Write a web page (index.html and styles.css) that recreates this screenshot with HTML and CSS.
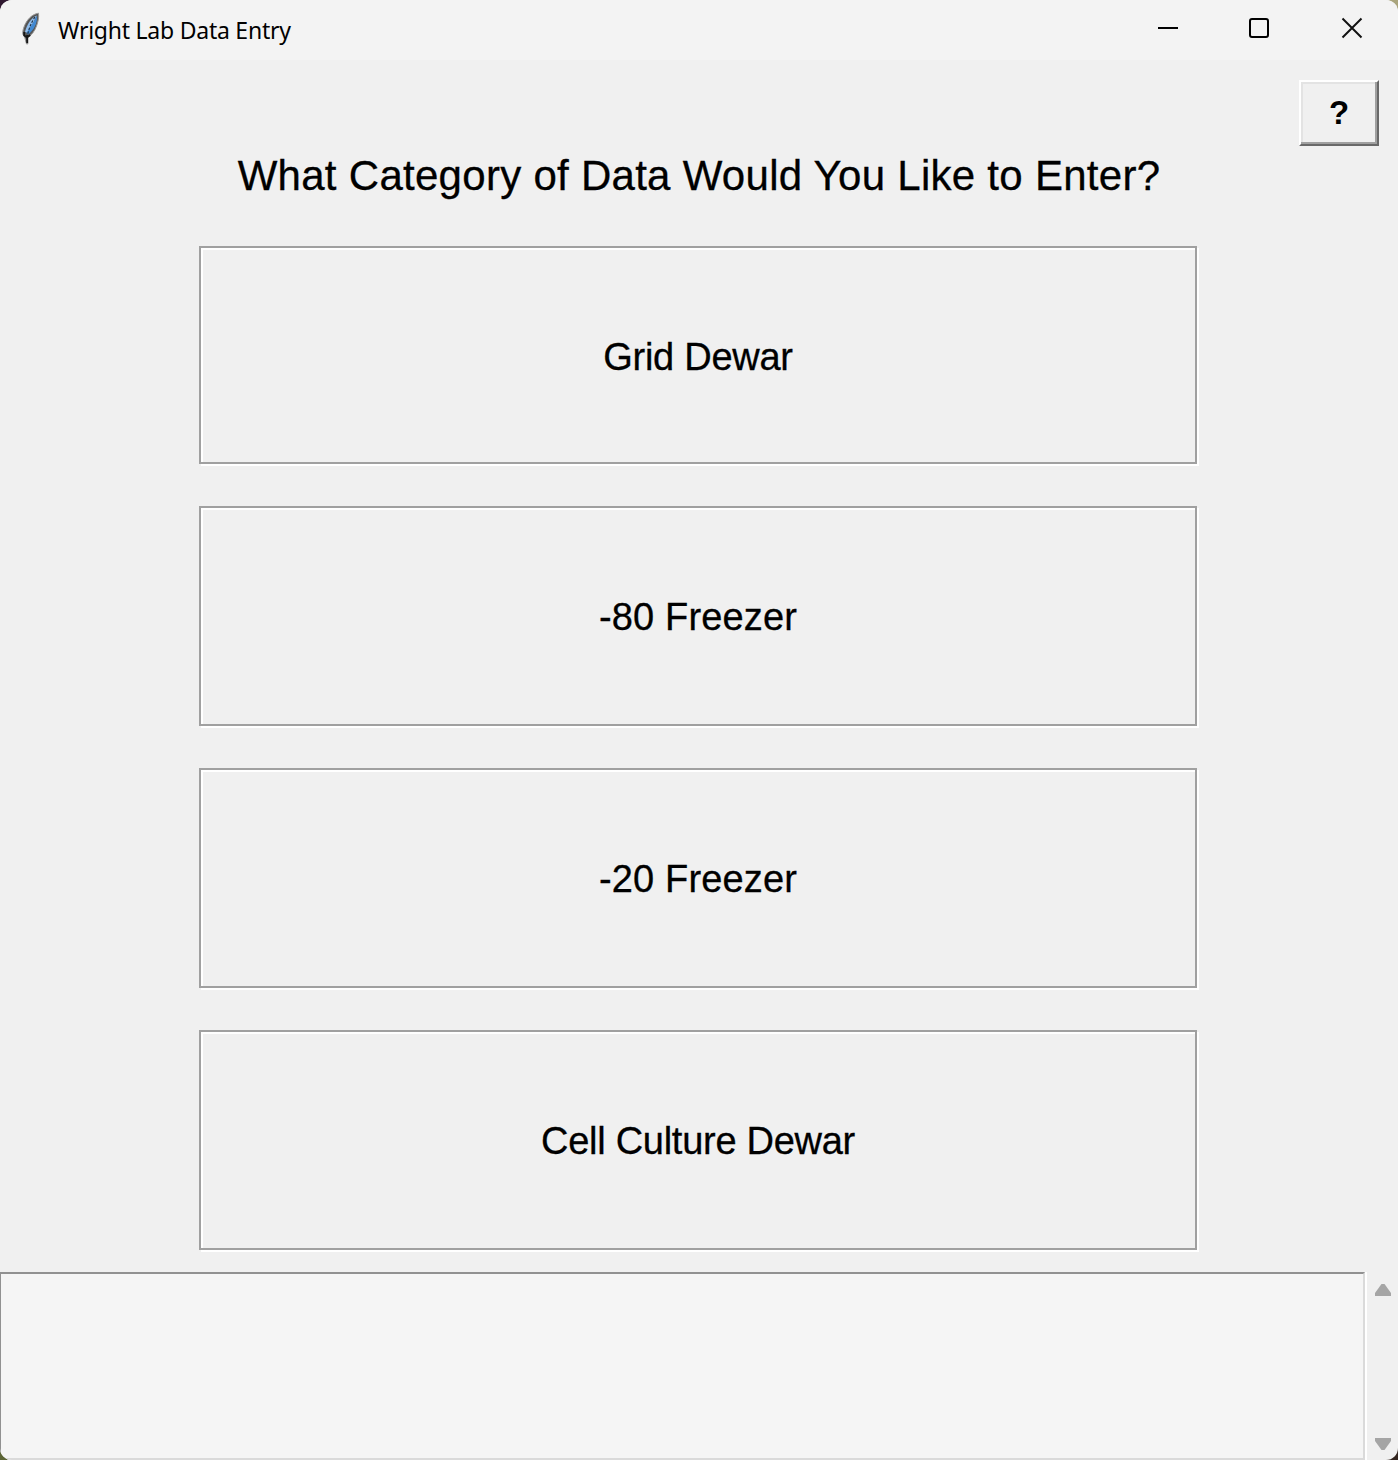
FILE: index.html
```html
<!DOCTYPE html>
<html lang="en">
<head>
<meta charset="utf-8">
<title>Wright Lab Data Entry</title>
<link rel="stylesheet" href="styles.css">
</head>
<body>
<div class="window">
  <header class="titlebar">
    <svg class="feather" width="22" height="34" viewBox="0 0 22 34">
      <path d="M18.500 1.200C12 2 6.500 8 4 15c-1.500 4-2 8 .5 9.500L6.500 32h1.300v-7c4-2 7-6 8.700-11 1.500-4 2.500-8 2-12.800Z" fill="#555" stroke="#999" stroke-width="1"/>
      <path d="M17 3.500C11 6 7 12 5 20L8 21Z" fill="#8fbcec"/>
      <path d="M17.200 4C17 12 14 18 8 22.500L6.500 21Z" fill="#4189d2"/>
      <path d="M15 5C11 11 8.500 17 7.200 25" fill="none" stroke="#1a2a3a" stroke-width="1.100" stroke-dasharray="2.500 1.500"/>
      <path d="M4.200 20v3.500l3 2 3-2.500M7.200 23v8" fill="none" stroke="#151515" stroke-width="1.800"/>
    </svg>
    <span class="title">Wright Lab Data Entry</span>
    <div class="controls">
      <svg width="20" height="20" viewBox="0 0 20 20"><path d="M0 10h20" stroke="#000" stroke-width="2"/></svg>
      <svg class="maximize" width="20" height="20" viewBox="0 0 20 20"><rect x="1" y="1" width="18" height="18" rx="2" fill="none" stroke="#000" stroke-width="2"/></svg>
      <svg width="20" height="20" viewBox="0 0 20 20"><path d="M.5.500l19 19M19.500.500l-19 19" stroke="#111" stroke-width="2"/></svg>
    </div>
  </header>
  <div class="toolbar"><button class="help"><span>?</span></button></div>
  <h1 class="heading">What Category of Data Would You Like to Enter?</h1>
  <main class="choices">
    <button class="choice choice-first">Grid Dewar</button>
    <button class="choice choice-freezer">-80 Freezer</button>
    <button class="choice choice-freezer">-20 Freezer</button>
    <button class="choice">Cell Culture Dewar</button>
  </main>
  <footer class="log">
    <div class="output"></div>
    <div class="scrollbar">
      <svg width="16" height="12" viewBox="0 0 16 12"><path d="M6.500 0h3L16 9v3H0V9Z" fill="#a5a5a5"/></svg>
      <svg width="16" height="12" viewBox="0 0 16 12"><path d="M0 0h16v3L9.500 12h-3L0 3Z" fill="#a5a5a5"/></svg>
    </div>
  </footer>
</div>
</body>
</html>
```
FILE: styles.css
```css
* { box-sizing: border-box; }
html { background: linear-gradient(90deg, #2f1830 0 50%, #aaa57d 50%) top / 100% 50% no-repeat, linear-gradient(90deg, #5c6536 0 50%, #33251f 50%); }
body { margin: 0; }
.window {
  width: 1398px;
  height: 1460px;
  display: flex;
  flex-direction: column;
  overflow: hidden;
  border-radius: 12px;
  background: #f0f0f0;
  color: #000;
  font-family: "Liberation Sans", Arial, sans-serif;
}
.titlebar {
  height: 60px;
  flex: none;
  display: flex;
  align-items: flex-start;
  padding: 12px 36px 0 20px;
  background: #f3f3f3;
}
.feather { flex: none; }
.title {
  margin: 2px 0 0 16px;
  font: 23px/32px "Noto Sans", sans-serif;
  letter-spacing: -0.24px;
  white-space: nowrap;
}
.controls {
  display: flex;
  width: 204px;
  margin: 6px 0 0 auto;
}
.controls svg { overflow: visible; }
.maximize { margin: 0 73px 0 71px; }
.toolbar {
  display: flex;
  justify-content: flex-end;
  height: 86px;
  flex: none;
  padding: 20px 19px 0 0;
}
.help {
  width: 80px;
  height: 66px;
  padding: 0;
  border: 2px solid;
  border-color: #fff #696969 #696969 #fff;
  background: #f0f0f0;
  box-shadow: inset -2px -2px #a0a0a0, inset 2px 2px #e3e3e3;
  color: #000;
  font: bold 33px/62px "Liberation Sans", Arial, sans-serif;
}
.heading {
  margin: 0;
  height: 100px;
  flex: none;
  text-align: center;
  font-size: 42px;
  font-weight: 400;
  line-height: 60px;
  letter-spacing: 0.28px;
  -webkit-text-stroke: 0.3px #000;
  white-space: nowrap;
}
.choices {
  display: flex;
  flex-direction: column;
  gap: 42px;
  width: 998px;
  margin-left: 199px;
}
.choice {
  height: 220px;
  padding: 2px 0 0;
  border: 2px solid #a0a0a0;
  border-radius: 0;
  background: #f0f0f0;
  box-shadow: 2px 2px #fff, inset 2px 2px #fff;
  color: #000;
  font: 38px/44px "Liberation Sans", Arial, sans-serif;
  letter-spacing: -0.27px;
  -webkit-text-stroke: 0.3px #000;
}
.choice-first { height: 218px; padding-top: 4px; }
.choice-freezer { letter-spacing: 0.15px; }
.log {
  display: flex;
  height: 188px;
  margin-top: 22px;
  flex: none;
}
.output {
  width: 1365px;
  border: solid;
  border-width: 2px 2px 2px 1px;
  border-color: #919191 #dadada #dadada #919191;
  background: #f5f5f5;
  box-shadow: 2px 0 #fff;
}
.scrollbar {
  flex: 1;
  display: flex;
  flex-direction: column;
  justify-content: space-between;
  align-items: flex-end;
  padding: 12px 7px 10px 0;
}
```
